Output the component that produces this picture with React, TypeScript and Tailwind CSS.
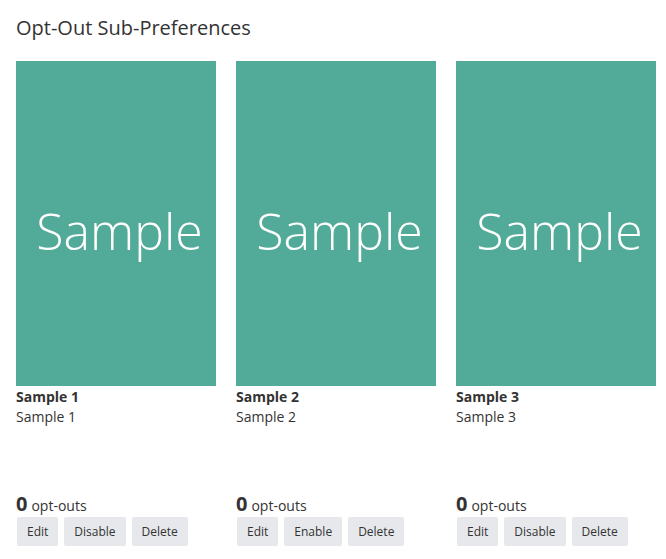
import React from "react";

const items = [
  { name: "Sample 1", desc: "Sample 1", count: 0, toggle: "Disable" },
  { name: "Sample 2", desc: "Sample 2", count: 0, toggle: "Enable" },
  { name: "Sample 3", desc: "Sample 3", count: 0, toggle: "Disable" },
];

const Btn = ({ label }: { label: string }) => (
  <button className="h-[29px] px-[10px] rounded-[2px] bg-[#e6e8eb] text-[12px] text-[#333] leading-none">
    {label}
  </button>
);

export default function App() {
  return (
    <div className="min-h-screen bg-white text-[#333] font-['Open_Sans',sans-serif] px-4 pt-[14px]">
      <h2 className="text-[20px] leading-[28px] font-normal">Opt-Out Sub-Preferences</h2>
      <div className="flex gap-5 mt-[19px]">
        {items.map((item) => (
          <div key={item.name} className="w-[200px] shrink-0 flex flex-col">
            <div className="h-[325px] bg-[#52aa98] flex items-center justify-center pt-[16px] pl-[7px]">
              <span className="text-white text-[50px] font-light">Sample</span>
            </div>
            <div className="text-[14px] leading-[20px] font-bold mt-[1px]">{item.name}</div>
            <div className="text-[14px] leading-[20px]">{item.desc}</div>
            <div className="mt-[66px] flex items-baseline gap-1">
              <span className="text-[20px] leading-[22px] font-bold">{item.count}</span>
              <span className="text-[14px]">opt-outs</span>
            </div>
            <div className="flex gap-[6px] mt-[1px] pl-[1px]">
              <Btn label="Edit" />
              <Btn label={item.toggle} />
              <Btn label="Delete" />
            </div>
          </div>
        ))}
      </div>
    </div>
  );
}
